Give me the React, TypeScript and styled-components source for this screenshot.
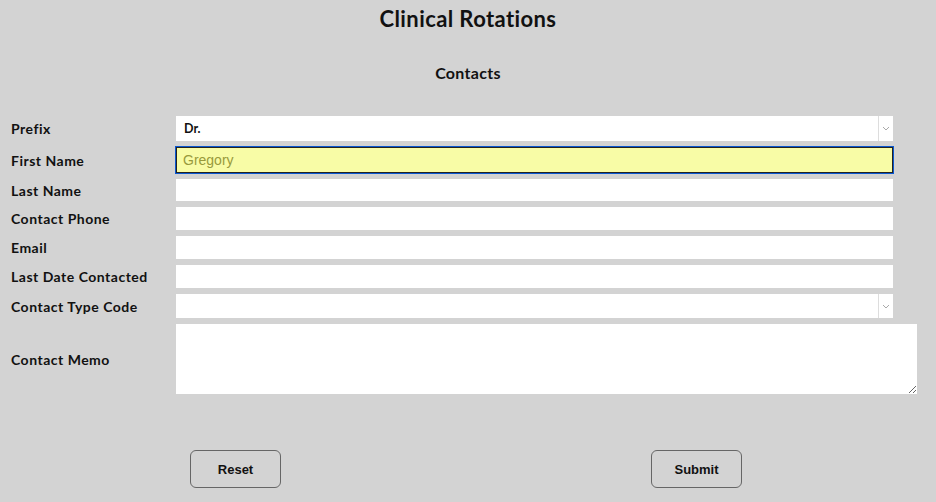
import React from 'react';
import styled, { createGlobalStyle } from 'styled-components';

const GlobalStyle = createGlobalStyle`
  body {
    margin: 0;
    background: #d3d3d3;
    font-family: Lato, "Liberation Sans", sans-serif;
    color: #111;
  }
`;

const Page = styled.div`
  width: 936px;
  height: 502px;
  overflow: hidden;
`;

const Title = styled.h1`
  margin: 0;
  height: 36px;
  line-height: 37px;
  text-align: center;
  font-size: 22px;
  font-weight: 700;
  letter-spacing: 0.4px;
`;

const SubTitle = styled.h2`
  margin: 27px 0 0;
  height: 20px;
  line-height: 20px;
  text-align: center;
  font-size: 16px;
  font-weight: 700;
  letter-spacing: 0.3px;
`;

const Form = styled.form`
  margin-top: 33px;
  padding-left: 11px;
  display: grid;
  grid-template-columns: 165px 717px;
  row-gap: 6px;
  align-items: center;
`;

const Label = styled.label`
  font-size: 14px;
  font-weight: 700;
  letter-spacing: 0.5px;
`;

const Field = styled.input<{ $h: number; $active?: boolean }>`
  box-sizing: border-box;
  width: 100%;
  height: ${p => p.$h}px;
  margin: 0;
  padding: 0 6px;
  border: ${p => (p.$active ? '1px solid #222' : 'none')};
  outline: ${p => (p.$active ? '1px solid #0a58d0' : 'none')};
  outline-offset: 0;
  background: ${p => (p.$active ? '#f8fca6' : '#fff')};
  font-family: "Liberation Sans", Arial, sans-serif;
  font-size: 14px;
  color: #999a3c;
`;

const SelectBox = styled.div<{ $h: number }>`
  position: relative;
  height: ${p => p.$h}px;
  background: #fff;
`;

const Select = styled.select`
  appearance: none;
  width: 100%;
  height: 100%;
  border: none;
  outline: none;
  background: transparent;
  padding: 0 0 0 8px;
  font-family: Lato, "Liberation Sans", sans-serif;
  font-size: 12.5px;
  font-weight: 700;
  color: #111;
`;

const Arrow = styled.span`
  position: absolute;
  right: 0;
  top: 0;
  bottom: 0;
  width: 14px;
  border-left: 1px solid #ddd;
  display: flex;
  align-items: center;
  justify-content: center;
  pointer-events: none;
`;

const Memo = styled.textarea`
  box-sizing: border-box;
  width: 741px;
  height: 70px;
  margin: 0;
  border: none;
  outline: none;
  background: #fff;
  resize: both;
  justify-self: start;
`;

const Buttons = styled.div`
  margin: 56px 0 0 190px;
  display: flex;
  gap: 370px;
`;

const Button = styled.button`
  box-sizing: border-box;
  width: 91px;
  height: 38px;
  border: 1px solid #666;
  border-radius: 6px;
  background: transparent;
  font-family: "Liberation Sans", Arial, sans-serif;
  font-size: 13px;
  font-weight: 700;
  color: #111;
`;

const Chevron = () => (
  <svg width="8" height="5" viewBox="0 0 8 5">
    <path d="M1 1l3 3 3-3" fill="none" stroke="#aaa" strokeWidth="1" />
  </svg>
);

const DropDown = ({ h, value }: { h: number; value: string }) => (
  <SelectBox $h={h}>
    <Select defaultValue={value}>
      <option value={value}>{value}</option>
    </Select>
    <Arrow><Chevron /></Arrow>
  </SelectBox>
);

const App: React.FC = () => (
  <Page>
    <GlobalStyle />
    <Title>Clinical Rotations</Title>
    <SubTitle>Contacts</SubTitle>
    <Form onSubmit={e => e.preventDefault()}>
      <Label>Prefix</Label>
      <DropDown h={25} value="Dr." />
      <Label>First Name</Label>
      <Field $h={26} $active defaultValue="Gregory" />
      <Label>Last Name</Label>
      <Field $h={22} />
      <Label>Contact Phone</Label>
      <Field $h={23} />
      <Label>Email</Label>
      <Field $h={23} />
      <Label>Last Date Contacted</Label>
      <Field $h={23} />
      <Label>Contact Type Code</Label>
      <DropDown h={24} value="" />
      <Label>Contact Memo</Label>
      <Memo />
    </Form>
    <Buttons>
      <Button type="reset">Reset</Button>
      <Button type="submit">Submit</Button>
    </Buttons>
  </Page>
);

export default App;
